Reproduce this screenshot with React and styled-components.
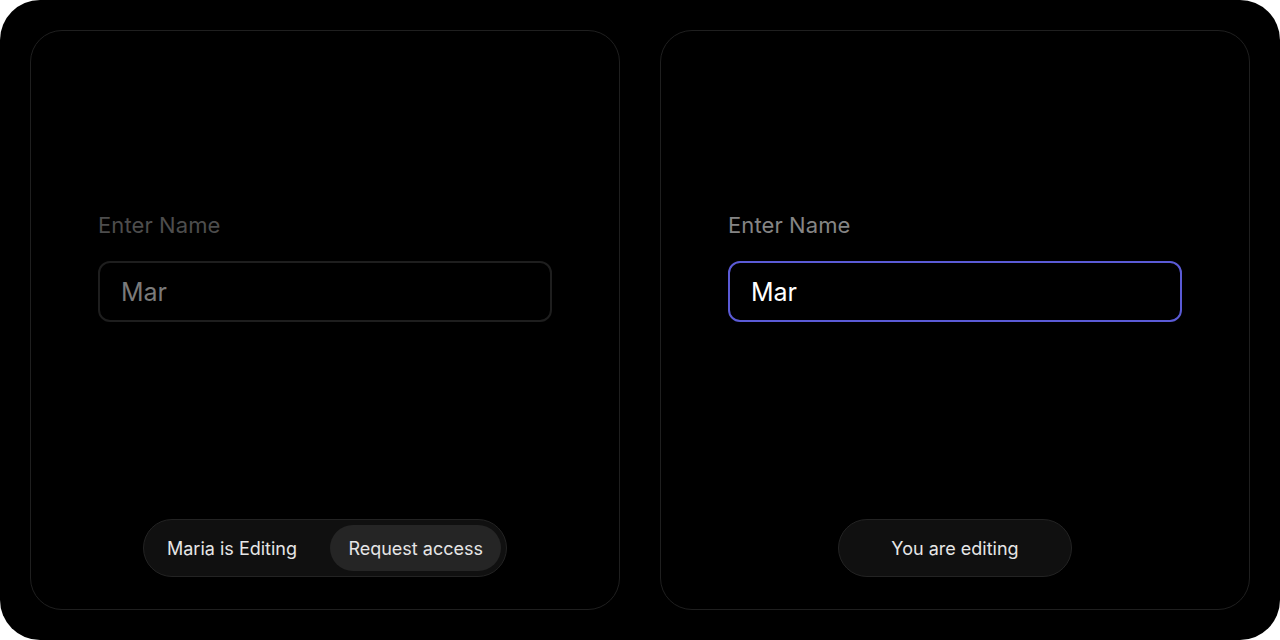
import React from 'react';
import styled, { createGlobalStyle } from 'styled-components';

const GlobalStyle = createGlobalStyle`
  html, body {
    margin: 0;
    padding: 0;
    background: #ffffff;
  }
  * {
    box-sizing: border-box;
  }
`;

function Panel({ active, value, children }) {
  return (
    <Card>
      <Field>
        <Label active={active}>Enter Name</Label>
        <Input active={active}>{value}</Input>
      </Field>
      <Footer>{children}</Footer>
    </Card>
  );
}

export default function App() {
  return (
    <>
      <GlobalStyle />
      <Frame>
        <Panel value="Mar">
          <Pill>
            <PillText>Maria is Editing</PillText>
            <RequestBtn type="button">Request access</RequestBtn>
          </Pill>
        </Panel>
        <Panel active value="Mar">
          <Pill wide>
            <PillText>You are editing</PillText>
          </Pill>
        </Panel>
      </Frame>
    </>
  );
}

const Frame = styled.div`
  width: 1280px;
  height: 640px;
  background: #000;
  border-radius: 40px;
  padding: 30px;
  display: grid;
  grid-template-columns: 1fr 1fr;
  gap: 40px;
  font-family: Inter, 'Liberation Sans', sans-serif;
`;

const Card = styled.section`
  display: flex;
  flex-direction: column;
  border: 1px solid #1f1f1f;
  border-radius: 32px;
  padding: 182px 67px 32px;
`;

const Field = styled.div`
  display: flex;
  flex-direction: column;
  gap: 24px;
`;

const Label = styled.label`
  font-size: 22px;
  line-height: 24px;
  letter-spacing: 0.1px;
  color: ${({ active }) => (active ? '#858585' : '#4d4d4d')};
`;

const Input = styled.div`
  height: 61px;
  display: flex;
  align-items: center;
  padding: 0 21px;
  border-radius: 12px;
  border: ${({ active }) => (active ? '2px solid #5b5bd6' : '2px solid #1e1e1e')};
  font-size: 25px;
  color: ${({ active }) => (active ? '#ffffff' : '#7a7a7a')};
`;

const Footer = styled.div`
  margin-top: auto;
  display: flex;
  justify-content: center;
`;

const Pill = styled.div`
  height: 58px;
  display: flex;
  align-items: center;
  justify-content: ${({ wide }) => (wide ? 'center' : 'space-between')};
  width: ${({ wide }) => (wide ? '234px' : '364px')};
  padding: ${({ wide }) => (wide ? '0' : '0 5px 0 23px')};
  background: #101010;
  border: 1px solid #232323;
  border-radius: 999px;
`;

const PillText = styled.span`
  font-size: 18px;
  color: #e6e6e6;
`;

const RequestBtn = styled.button`
  height: 46px;
  padding: 0 18px;
  border: none;
  border-radius: 999px;
  background: #252525;
  color: #e6e6e6;
  font-family: inherit;
  font-size: 18px;
`;
